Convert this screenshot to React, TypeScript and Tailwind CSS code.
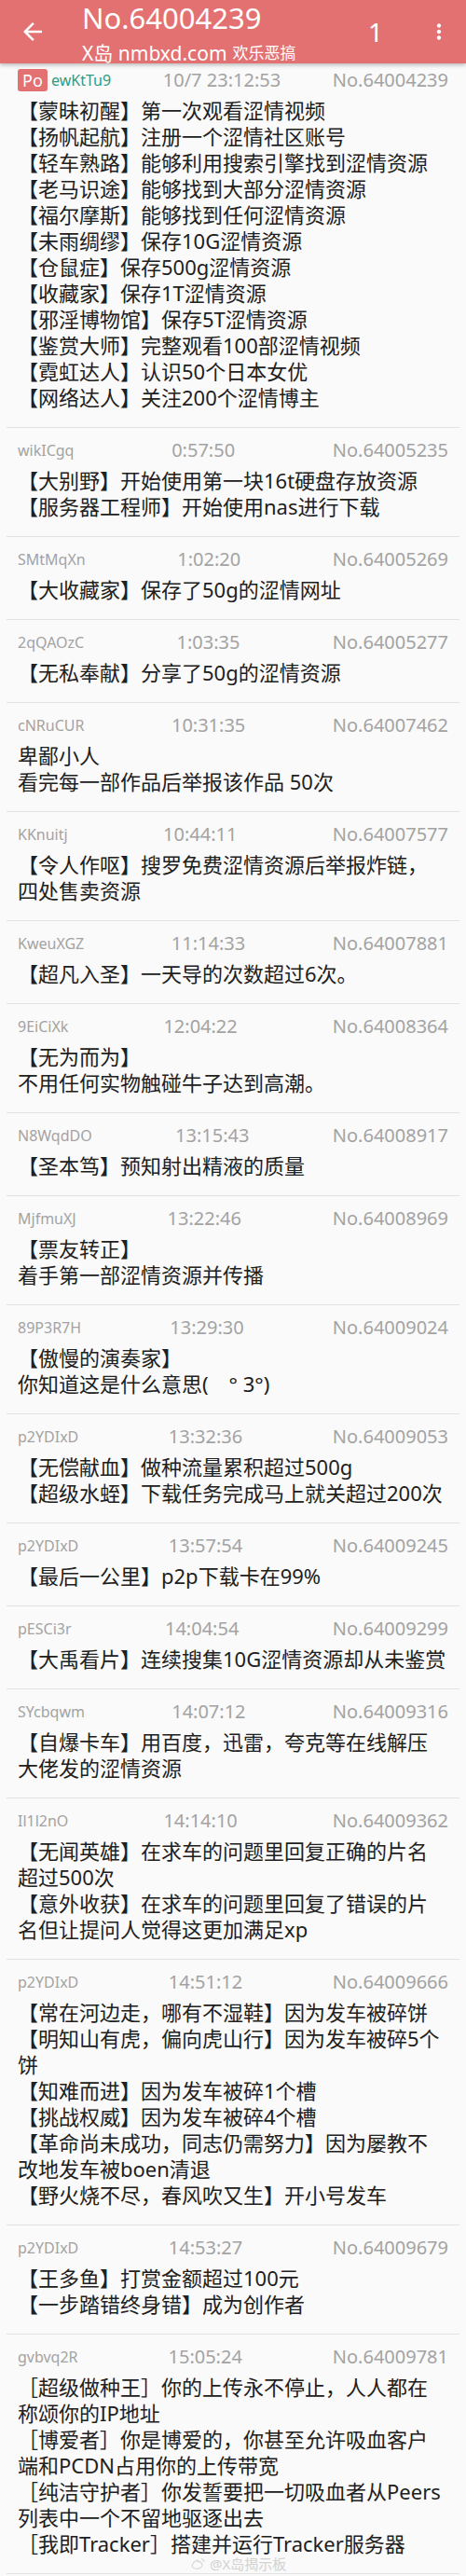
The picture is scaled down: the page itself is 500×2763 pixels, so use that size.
import React from 'react';

type Post = {
    uid: string;
    time: string;
    no: string;
    lines: string[];
    po?: boolean;
};

const posts: Post[] = [
    {
        uid: 'ewKtTu9',
        time: '10/7 23:12:53',
        no: 'No.64004239',
        po: true,
        lines: [
            '【蒙昧初醒】第一次观看涩情视频',
            '【扬帆起航】注册一个涩情社区账号',
            '【轻车熟路】能够利用搜索引擎找到涩情资源',
            '【老马识途】能够找到大部分涩情资源',
            '【福尔摩斯】能够找到任何涩情资源',
            '【未雨绸缪】保存10G涩情资源',
            '【仓鼠症】保存500g涩情资源',
            '【收藏家】保存1T涩情资源',
            '【邪淫博物馆】保存5T涩情资源',
            '【鉴赏大师】完整观看100部涩情视频',
            '【霓虹达人】认识50个日本女优',
            '【网络达人】关注200个涩情博主',
        ],
    },
    {
        uid: 'wikICgq',
        time: '0:57:50',
        no: 'No.64005235',
        lines: ['【大别野】开始使用第一块16t硬盘存放资源', '【服务器工程师】开始使用nas进行下载'],
    },
    { uid: 'SMtMqXn', time: '1:02:20', no: 'No.64005269', lines: ['【大收藏家】保存了50g的涩情网址'] },
    { uid: '2qQAOzC', time: '1:03:35', no: 'No.64005277', lines: ['【无私奉献】分享了50g的涩情资源'] },
    { uid: 'cNRuCUR', time: '10:31:35', no: 'No.64007462', lines: ['卑鄙小人', '看完每一部作品后举报该作品 50次'] },
    {
        uid: 'KKnuitj',
        time: '10:44:11',
        no: 'No.64007577',
        lines: ['【令人作呕】搜罗免费涩情资源后举报炸链，', '四处售卖资源'],
    },
    { uid: 'KweuXGZ', time: '11:14:33', no: 'No.64007881', lines: ['【超凡入圣】一天导的次数超过6次。'] },
    { uid: '9EiCiXk', time: '12:04:22', no: 'No.64008364', lines: ['【无为而为】', '不用任何实物触碰牛子达到高潮。'] },
    { uid: 'N8WqdDO', time: '13:15:43', no: 'No.64008917', lines: ['【圣本笃】预知射出精液的质量'] },
    { uid: 'MjfmuXJ', time: '13:22:46', no: 'No.64008969', lines: ['【票友转正】', '着手第一部涩情资源并传播'] },
    { uid: '89P3R7H', time: '13:29:30', no: 'No.64009024', lines: ['【傲慢的演奏家】', '你知道这是什么意思(　° 3°)'] },
    {
        uid: 'p2YDIxD',
        time: '13:32:36',
        no: 'No.64009053',
        lines: ['【无偿献血】做种流量累积超过500g', '【超级水蛭】下载任务完成马上就关超过200次'],
    },
    { uid: 'p2YDIxD', time: '13:57:54', no: 'No.64009245', lines: ['【最后一公里】p2p下载卡在99%'] },
    { uid: 'pESCi3r', time: '14:04:54', no: 'No.64009299', lines: ['【大禹看片】连续搜集10G涩情资源却从未鉴赏'] },
    {
        uid: 'SYcbqwm',
        time: '14:07:12',
        no: 'No.64009316',
        lines: ['【自爆卡车】用百度，迅雷，夸克等在线解压', '大佬发的涩情资源'],
    },
    {
        uid: 'Il1l2nO',
        time: '14:14:10',
        no: 'No.64009362',
        lines: [
            '【无闻英雄】在求车的问题里回复正确的片名',
            '超过500次',
            '【意外收获】在求车的问题里回复了错误的片',
            '名但让提问人觉得这更加满足xp',
        ],
    },
    {
        uid: 'p2YDIxD',
        time: '14:51:12',
        no: 'No.64009666',
        lines: [
            '【常在河边走，哪有不湿鞋】因为发车被碎饼',
            '【明知山有虎，偏向虎山行】因为发车被碎5个',
            '饼',
            '【知难而进】因为发车被碎1个槽',
            '【挑战权威】因为发车被碎4个槽',
            '【革命尚未成功，同志仍需努力】因为屡教不',
            '改地发车被boen清退',
            '【野火烧不尽，春风吹又生】开小号发车',
        ],
    },
    {
        uid: 'p2YDIxD',
        time: '14:53:27',
        no: 'No.64009679',
        lines: ['【王多鱼】打赏金额超过100元', '【一步踏错终身错】成为创作者'],
    },
    {
        uid: 'gvbvq2R',
        time: '15:05:24',
        no: 'No.64009781',
        lines: [
            '［超级做种王］你的上传永不停止，人人都在',
            '称颂你的IP地址',
            '［博爱者］你是博爱的，你甚至允许吸血客户',
            '端和PCDN占用你的上传带宽',
            '［纯洁守护者］你发誓要把一切吸血者从Peers',
            '列表中一个不留地驱逐出去',
            '［我即Tracker］搭建并运行Tracker服务器',
        ],
    },
];

const font = { fontFamily: '"Noto Sans", "Noto Sans CJK SC", sans-serif' };

function Header() {
    return (
        <div className="relative z-10 flex h-[68px] items-center bg-[#e37172] text-white shadow-[0_2px_4px_rgba(0,0,0,0.25)]">
            <svg viewBox="0 0 24 24" className="ml-[20px] h-[30px] w-[30px] fill-white">
                <path d="M20 11H7.83l5.59-5.59L12 4l-8 8 8 8 1.41-1.41L7.83 13H20v-2z" />
            </svg>
            <div className="ml-[38px] flex h-full flex-1 flex-col">
                <div className="mt-[2px] h-[34px] text-[31px] leading-[34px]">No.64004239</div>
                <div className="mt-[10px] flex h-[22px] items-center whitespace-nowrap leading-[22px]">
                    <span className="text-[21px]">X岛 nmbxd.com</span>
                    <span className="ml-[6px] text-[17px]">欢乐恶搞</span>
                </div>
            </div>
            <span className="text-[28px] leading-none">1</span>
            <svg viewBox="0 0 24 24" className="ml-[47px] mr-[16px] h-[26px] w-[26px] fill-white">
                <path d="M12 8c1.1 0 2-.9 2-2s-.9-2-2-2-2 .9-2 2 .9 2 2 2zm0 2c-1.1 0-2 .9-2 2s.9 2 2 2 2-.9 2-2-.9-2-2-2zm0 6c-1.1 0-2 .9-2 2s.9 2 2 2 2-.9 2-2-.9-2-2-2z" />
            </svg>
        </div>
    );
}

function PostItem({ post, first, last }: { post: Post; first: boolean; last: boolean }) {
    return (
        <div className="relative">
            <div className={first ? 'px-[19px] pb-[18px] pt-[6px]' : 'px-[19px] pb-[18px] pt-[12px]'}>
                <div className="flex h-[24px] items-center justify-between whitespace-nowrap">
                    <div className="flex items-center gap-[4px]">
                        {post.po && (
                            <span className="flex h-[24px] w-[32px] items-center justify-center rounded-[3px] bg-[#e37172] text-[18px] leading-none text-white">
                                Po
                            </span>
                        )}
                        <span className={post.po ? 'text-[16px] text-[#2f9a80]' : 'text-[16px] text-[#a3a3a3]'}>
                            {post.uid}
                        </span>
                    </div>
                    <span className="text-[20px] text-[#a3a3a3]">{post.time}</span>
                    <span className="text-[20px] text-[#a3a3a3]">{post.no}</span>
                </div>
                <div className="mt-[6px] text-[22px] leading-[28px] text-[#202020]">
                    {post.lines.map((line, i) => (
                        <div key={i} className="whitespace-pre">
                            {line}
                        </div>
                    ))}
                </div>
            </div>
            <div className="mx-[7px] h-px bg-[#e2e2e2]" />
            {last && (
                <div className="absolute bottom-[2px] left-[204px] flex items-center gap-[3px] text-[15px] leading-none text-[#d2d2d2]">
                    <svg viewBox="0 0 24 24" className="h-[18px] w-[18px] fill-none stroke-[#d2d2d2]" strokeWidth="1.5">
                        <path d="M10 19c-4 0-7-2-7-4.5 0-2.6 3.5-6.5 6.5-7.5 1.5-.5 2 .5 1.5 2 2-1 4-1 3.5 1 2 .5 3 1.5 3 3 0 3-3.5 6-7.5 6z" />
                        <path d="M16 5c2 0 4 2 4 4" />
                    </svg>
                    <span>@X岛揭示板</span>
                </div>
            )}
        </div>
    );
}

export default function App() {
    return (
        <div className="min-h-screen bg-[#fafafa]" style={font}>
            <Header />
            {posts.map((post, i) => (
                <PostItem key={post.no} post={post} first={i === 0} last={i === posts.length - 1} />
            ))}
        </div>
    );
}
